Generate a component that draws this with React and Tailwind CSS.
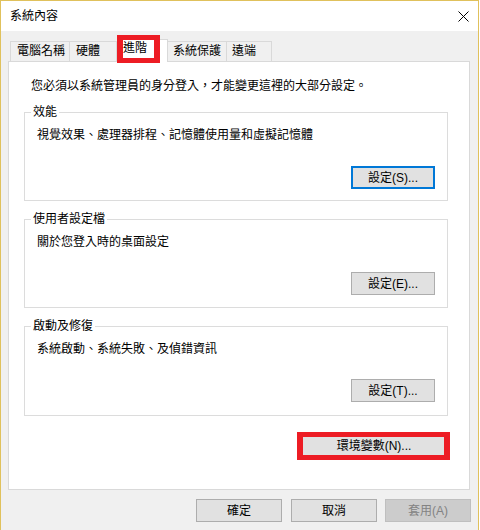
import React from "react";

const font = { fontFamily: '"Liberation Sans", "Noto Sans CJK TC", sans-serif' };

function Btn({ children, className = "" }) {
  return (
    <div
      className={`h-[23px] w-[84px] flex items-center justify-center bg-[#e1e1e1] border border-[#adadad] text-[12px] leading-[16px] text-black ${className}`}
    >
      {children}
    </div>
  );
}

function Group({ title, text, btn, focused, pt, btnMt, pb, mt }) {
  return (
    <fieldset
      className={`ml-[15px] w-[424px] border border-[#dcdcdc] ${mt}`}
    >
      <legend className="ml-[6px] px-[2px] text-[12px] leading-[16px] text-black">{title}</legend>
      <div className={`pl-[12px] text-[12px] leading-[16px] text-black ${pt}`}>{text}</div>
      <div className={`flex justify-end pr-[12px] ${btnMt} ${pb}`}>
        {focused ? (
          <div className="h-[23px] w-[84px] flex items-center justify-center bg-[#e1e1e1] border-2 border-[#0078d7] text-[12px] leading-[16px] text-black">
            {btn}
          </div>
        ) : (
          <Btn>{btn}</Btn>
        )}
      </div>
    </fieldset>
  );
}

export default function App() {
  return (
    <div className="relative w-[480px] h-[530px] bg-white overflow-hidden" style={font}>
      <div className="w-[479px] h-[530px] border-l border-r border-t border-[#e0c15c] flex flex-col">
        {/* Title bar */}
        <div className="h-[30px] bg-white flex items-center justify-between pl-[9px] pr-[9px] shrink-0">
          <span className="text-[12px] leading-[16px] text-black">系統內容</span>
          <svg width="11" height="11" viewBox="0 0 11 11" className="mr-[0px]">
            <path d="M0.5 0.5 L10.5 10.5 M10.5 0.5 L0.5 10.5" stroke="#000" strokeWidth="1" />
          </svg>
        </div>
        {/* Body */}
        <div className="flex-1 bg-[#f0f0f0] pt-[8px] pl-[7px] flex flex-col">
          {/* Tabs */}
          <div className="flex items-start h-[22px] ml-[2px] text-[12px] leading-[16px] text-black">
            <div className="mt-[2px] h-[20px] w-[60px] border-l border-t border-r border-[#d9d9d9] pl-[6px] pt-[1px]">電腦名稱</div>
            <div className="mt-[2px] h-[20px] w-[47px] border-t border-r border-[#d9d9d9] pl-[6px] pt-[1px]">硬體</div>
            <div className="relative z-10 h-[23px] w-[51px] bg-white border-l border-t border-r border-[#d9d9d9] pl-[5px]">進階</div>
            <div className="mt-[2px] h-[20px] w-[59px] border-t border-r border-[#d9d9d9] pl-[5px] pt-[1px]">系統保護</div>
            <div className="mt-[2px] h-[20px] w-[45px] border-t border-r border-[#d9d9d9] pl-[5px] pt-[1px]">遠端</div>
          </div>
          {/* Panel */}
          <div className="w-[462px] h-[429px] bg-white border border-[#d9d9d9] flex flex-col">
            <p className="mt-[16px] ml-[22px] text-[12px] leading-[16px] text-black">
              您必須以系統管理員的身分登入，才能變更這裡的大部分設定。
            </p>
            <Group
              title="效能"
              text="視覺效果、處理器排程、記憶體使用量和虛擬記憶體"
              btn="設定(S)..."
              focused
              mt="mt-[10px]"
              pt="pt-[7px]"
              btnMt="mt-[23px]"
              pb="pb-[11px]"
            />
            <Group
              title="使用者設定檔"
              text="關於您登入時的桌面設定"
              btn="設定(E)..."
              mt="mt-[10px]"
              pt="pt-[7px]"
              btnMt="mt-[22px]"
              pb="pb-[12px]"
            />
            <Group
              title="啟動及修復"
              text="系統啟動、系統失敗、及偵錯資訊"
              btn="設定(T)..."
              mt="mt-[10px]"
              pt="pt-[7px]"
              btnMt="mt-[22px]"
              pb="pb-[13px]"
            />
            <div className="flex justify-end pr-[20px] mt-[18px]">
              <Btn className="w-[150px]">環境變數(N)...</Btn>
            </div>
          </div>
          {/* Bottom buttons */}
          <div className="flex justify-end pr-[7px] mt-[9px]">
            <Btn className="w-[86px]">確定</Btn>
            <Btn className="w-[86px] ml-[9px]">取消</Btn>
            <div className="h-[23px] w-[86px] ml-[8px] flex items-center justify-center bg-[#cccccc] border border-[#bfbfbf] text-[12px] leading-[16px] text-[#838383]">
              套用(A)
            </div>
          </div>
        </div>
      </div>
      {/* Red annotations */}
      <div className="absolute left-[117px] top-[35px] w-[43px] h-[28px] border-x-[6px] border-y-[5px] border-[#ed1c24] z-20" />
      <div className="absolute left-[297px] top-[432px] w-[153px] h-[28px] border-x-[6px] border-y-[5px] border-[#ed1c24] z-20" />
    </div>
  );
}
